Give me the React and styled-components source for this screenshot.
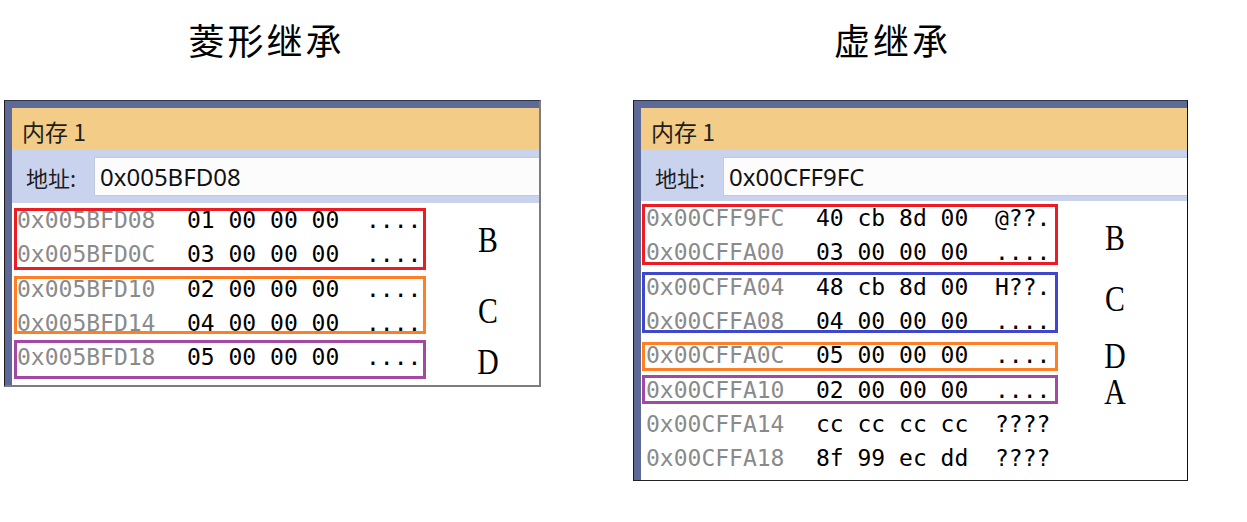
import styled, { createGlobalStyle } from 'styled-components';

const GlobalStyle = createGlobalStyle`
  body {
    margin: 0;
    background: #ffffff;
  }
`;

const Page = styled.div`
  display: flex;
  align-items: flex-start;
  gap: 92px;
  width: 1247px;
  height: 522px;
  padding-left: 4px;
  box-sizing: border-box;
  background: #ffffff;
`;

const Column = styled.div`
  display: flex;
  flex-direction: column;
  width: ${(p) => p.$width}px;
`;

/* $left: how far the title sits left of the panel's centre */
const Title = styled.h1`
  margin: 0 0 20px;
  height: 80px;
  line-height: 78px;
  padding-right: ${(p) => p.$left * 2}px;
  text-align: center;
  font-family: "Noto Sans CJK SC", sans-serif;
  font-size: 36px;
  font-weight: 400;
  letter-spacing: 3px;
  color: #000;
`;

const Panel = styled.div`
  display: flex;
  flex-direction: column;
  height: ${(p) => p.$height}px;
  box-sizing: border-box;
  border-top: 1px solid #2f3546;
  border-left: 1px solid #1c1c1c;
  border-right: ${(p) => (p.$dark ? '1px solid #111' : '2px solid #7d7d7d')};
  border-bottom: ${(p) => (p.$dark ? '1px solid #222' : '2px solid #7d7d7d')};
  overflow: hidden;
`;

const Frame = styled.div`
  flex: 1;
  display: flex;
  flex-direction: column;
  min-height: 0;
  border-top: 7px solid #5d6a98;
  border-left: 7px solid #5d6a98;
`;

const Header = styled.div`
  height: 42px;
  display: flex;
  align-items: center;
  padding: 3px 0 0 10px;
  box-sizing: border-box;
  background: #f3cd88;
  font-family: "Noto Sans CJK SC", sans-serif;
  font-size: 23px;
  color: #1e1e1e;
`;

const AddressBar = styled.div`
  height: 53px;
  display: flex;
  align-items: center;
  padding-left: 14px;
  background: #cad3ee;
`;

const AddressLabel = styled.span`
  width: 68px;
  font-family: "Noto Sans CJK SC", sans-serif;
  font-size: 22px;
  color: #1e1e1e;
`;

const AddressInput = styled.div`
  flex: 1;
  height: 39px;
  display: flex;
  align-items: center;
  padding-left: 5px;
  box-sizing: border-box;
  background: #fcfcfc;
  border: 1px solid #c3c9dc;
  border-right: none;
  font-family: "Noto Sans", sans-serif;
  font-size: 24px;
  color: #111;
`;

const Data = styled.div`
  position: relative;
  flex: 1;
  padding-left: 5px;
  margin-top: ${(p) => p.$lift}px;
  background: #ffffff;
`;

const Row = styled.div`
  height: 34.3px;
  display: flex;
  align-items: center;
  font-family: "DejaVu Sans Mono", monospace;
  font-size: 23px;
  white-space: pre;
  color: #000;
`;

const Addr = styled.span`
  color: #8a8a8a;
`;

const Bytes = styled.span`
  margin-left: 31.5px;
`;

const Chars = styled.span`
  margin-left: 26.7px;
`;

const Box = styled.div`
  position: absolute;
  left: ${(p) => p.$x}px;
  top: ${(p) => p.$y}px;
  width: ${(p) => p.$w}px;
  height: ${(p) => p.$h}px;
  box-sizing: border-box;
  border: 3px solid ${(p) => p.$color};
  pointer-events: none;
`;

const Tag = styled.div`
  position: absolute;
  left: ${(p) => p.$x}px;
  top: ${(p) => p.$y}px;
  transform: translate(-50%, -50%) scaleX(0.85);
  font-family: "Liberation Serif", serif;
  font-size: 35px;
  line-height: 1;
  color: #000;
`;

const RED = '#ed1c24';
const ORANGE = '#ff7f27';
const PURPLE = '#a349a4';
const BLUE = '#3f48cc';

const diamond = {
  title: '菱形继承',
  left: 6,
  width: 537,
  height: 287,
  dark: false,
  lift: 0,
  address: '0x005BFD08',
  rows: [
    ['0x005BFD08', '01 00 00 00', '....'],
    ['0x005BFD0C', '03 00 00 00', '....'],
    ['0x005BFD10', '02 00 00 00', '....'],
    ['0x005BFD14', '04 00 00 00', '....'],
    ['0x005BFD18', '05 00 00 00', '....'],
  ],
  boxes: [
    { x: 2, y: 5, w: 412, h: 62, color: RED },
    { x: 2, y: 73, w: 412, h: 58, color: ORANGE },
    { x: 2, y: 137, w: 412, h: 39, color: PURPLE },
  ],
  tags: [
    { t: 'B', x: 476, y: 37 },
    { t: 'C', x: 476, y: 108 },
    { t: 'D', x: 476, y: 159 },
  ],
};

const virtual = {
  title: '虚继承',
  left: 18,
  width: 555,
  height: 381,
  dark: true,
  lift: -2,
  address: '0x00CFF9FC',
  rows: [
    ['0x00CFF9FC', '40 cb 8d 00', '@??.'],
    ['0x00CFFA00', '03 00 00 00', '....'],
    ['0x00CFFA04', '48 cb 8d 00', 'H??.'],
    ['0x00CFFA08', '04 00 00 00', '....'],
    ['0x00CFFA0C', '05 00 00 00', '....'],
    ['0x00CFFA10', '02 00 00 00', '....'],
    ['0x00CFFA14', 'cc cc cc cc', '????'],
    ['0x00CFFA18', '8f 99 ec dd', '????'],
  ],
  boxes: [
    { x: 1, y: 3, w: 416, h: 61, color: RED },
    { x: 1, y: 71, w: 416, h: 61, color: BLUE },
    { x: 1, y: 141, w: 416, h: 29, color: ORANGE },
    { x: 1, y: 174, w: 416, h: 29, color: PURPLE },
  ],
  tags: [
    { t: 'B', x: 474, y: 37 },
    { t: 'C', x: 474, y: 98 },
    { t: 'D', x: 474, y: 155 },
    { t: 'A', x: 474, y: 191 },
  ],
};

const MemoryView = ({ view }) => (
  <Column $width={view.width}>
    <Title $left={view.left}>{view.title}</Title>
    <Panel $height={view.height} $dark={view.dark}>
      <Frame>
        <Header>内存 1</Header>
        <AddressBar>
          <AddressLabel>地址:</AddressLabel>
          <AddressInput>{view.address}</AddressInput>
        </AddressBar>
        <Data $lift={view.lift}>
          {view.rows.map(([addr, bytes, chars]) => (
            <Row key={addr}>
              <Addr>{addr}</Addr>
              <Bytes>{bytes}</Bytes>
              <Chars>{chars}</Chars>
            </Row>
          ))}
          {view.boxes.map((b, i) => (
            <Box key={i} $x={b.x} $y={b.y} $w={b.w} $h={b.h} $color={b.color} />
          ))}
          {view.tags.map((tag) => (
            <Tag key={tag.t} $x={tag.x} $y={tag.y}>
              {tag.t}
            </Tag>
          ))}
        </Data>
      </Frame>
    </Panel>
  </Column>
);

const App = () => {
  return (
    <>
      <GlobalStyle />
      <Page>
        <MemoryView view={diamond} />
        <MemoryView view={virtual} />
      </Page>
    </>
  );
};

export default App;
